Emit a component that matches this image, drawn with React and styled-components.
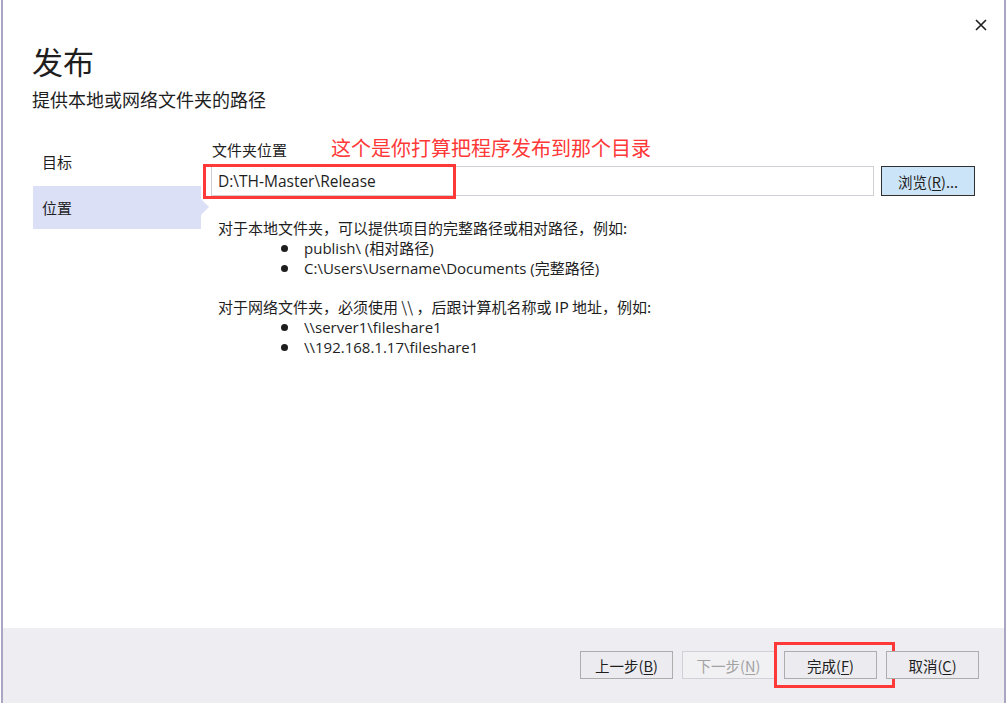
import React from "react";
import styled, { createGlobalStyle } from "styled-components";

const Global = createGlobalStyle`
  html, body { margin: 0; padding: 0; background: #ffffff; }
  body {
    font-family: "Noto Sans", "Noto Sans CJK SC", sans-serif;
    color: #1e1e1e;
  }
  * { box-sizing: border-box; }
`;

const Page = styled.div`
  width: 1007px;
  height: 703px;
  padding-left: 1px;
  display: flex;
  background: #fff;
`;

const Window = styled.div`
  position: relative;
  width: 1005px;
  height: 703px;
  border-left: 2px solid #a9a6c4;
  border-right: 2px solid #a9a6c4;
  display: flex;
  flex-direction: column;
  background: #fff;
`;

const Header = styled.header`
  padding: 40px 0 0 29px;
`;

const Title = styled.h1`
  margin: 0;
  font-family: "Noto Sans CJK SC", sans-serif;
  font-weight: 400;
  font-size: 31px;
  line-height: 42px;
  color: #1e1e1e;
`;

const Subtitle = styled.div`
  margin-top: 5px;
  font-family: "Noto Sans CJK SC", sans-serif;
  font-size: 18px;
  line-height: 24px;
  color: #1e1e1e;
`;

const Close = styled.button`
  position: absolute;
  top: 15px;
  right: 13px;
  width: 20px;
  height: 20px;
  padding: 0;
  border: none;
  background: transparent;
  display: flex;
  align-items: center;
  justify-content: center;
`;

const Body = styled.div`
  display: flex;
  padding-left: 30px;
  margin-top: 29px;
`;

const Sidebar = styled.nav`
  width: 168px;
  flex: none;
  display: flex;
  flex-direction: column;
  gap: 3px;
`;

const NavItem = styled.div`
  position: relative;
  height: 43px;
  display: flex;
  align-items: center;
  padding-left: 9px;
  font-family: "Noto Sans CJK SC", sans-serif;
  font-size: 15px;
  color: #1e1e1e;
  background: ${(p) => (p.$active ? "#dbe0f7" : "transparent")};
  &::after {
    content: "";
    display: ${(p) => (p.$active ? "block" : "none")};
    position: absolute;
    right: -8px;
    top: 13px;
    border-top: 8px solid transparent;
    border-bottom: 8px solid transparent;
    border-left: 8px solid #dbe0f7;
  }
`;

const Content = styled.div`
  margin-left: 10px;
  flex: 1;
  padding-right: 29px;
`;

const LabelRow = styled.div`
  display: flex;
  align-items: flex-start;
  height: 23px;
`;

const Label = styled.label`
  font-family: "Noto Sans CJK SC", sans-serif;
  font-size: 15px;
  line-height: 20px;
  padding-left: 1px;
  width: 120px;
  color: #1e1e1e;
`;

const Annotation = styled.span`
  font-family: "Noto Sans CJK SC", sans-serif;
  font-size: 20px;
  line-height: 26px;
  color: #ff3838;
  position: relative;
  top: -5px;
`;

const InputRow = styled.div`
  display: flex;
  gap: 7px;
  margin-top: 3px;
`;

const InputWrap = styled.div`
  position: relative;
  flex: 1;
`;

const Input = styled.div`
  height: 30px;
  border: 1px solid #cfcfd6;
  background: #fff;
  display: flex;
  align-items: center;
  padding-left: 6px;
  font-family: "Open Sans", "Noto Sans CJK SC", sans-serif;
  font-size: 15.5px;
  color: #1e1e1e;
`;

const RedBox = styled.div`
  position: absolute;
  left: ${(p) => p.$l}px;
  top: ${(p) => p.$t}px;
  width: ${(p) => p.$w}px;
  height: ${(p) => p.$h}px;
  border: 3px solid #ff3838;
  pointer-events: none;
`;

const BrowseButton = styled.button`
  width: 94px;
  height: 30px;
  border: 1px solid #2f2f2f;
  background: #cce4f7;
  font-family: "Noto Sans CJK SC", sans-serif;
  font-size: 14.5px;
  color: #1e1e1e;
  padding: 0;
`;

const Help = styled.div`
  margin-top: 22px;
  padding-left: 7px;
  font-family: "Noto Sans CJK SC", sans-serif;
  font-size: 15px;
  line-height: 20px;
  color: #1e1e1e;
`;

const Para = styled.p`
  margin: 0 0 19px 0;
`;

const List = styled.ul`
  list-style: none;
  margin: 0;
  padding: 0 0 0 63px;
`;

const Item = styled.li`
  display: flex;
  align-items: center;
  height: 20px;
  font-family: "Open Sans", "Noto Sans CJK SC", sans-serif;
  font-size: 15px;
  &::before {
    content: "";
    width: 7px;
    height: 7px;
    border-radius: 50%;
    background: #1e1e1e;
    margin-right: 16px;
    flex: none;
  }
`;

const Spacer = styled.div`
  flex: 1;
`;

const Footer = styled.footer`
  height: 75px;
  background: #eeeef2;
  display: flex;
  align-items: center;
  justify-content: flex-end;
  gap: 9px;
  padding-right: 25px;
  padding-bottom: 1px;
`;

const FooterButton = styled.button`
  position: relative;
  width: 93px;
  height: 28px;
  padding: 0;
  background: ${(p) => (p.disabled ? "#f1f1f4" : "#ececf0")};
  border: 1px solid ${(p) => (p.disabled ? "#d0d0d6" : "#adadad")};
  color: ${(p) => (p.disabled ? "#a2a2a2" : "#1e1e1e")};
  font-family: "Noto Sans CJK SC", sans-serif;
  font-size: 14.5px;
`;

const U = styled.span`
  text-decoration: underline;
  text-underline-offset: 2px;
`;

export default function App() {
  return (
    <>
      <Global />
      <Page>
        <Window>
          <Close aria-label="close">
            <svg width="12" height="12" viewBox="0 0 12 12">
              <path d="M1 1 L11 11 M11 1 L1 11" stroke="#1e1e1e" strokeWidth="1.6" />
            </svg>
          </Close>
          <Header>
            <Title>发布</Title>
            <Subtitle>提供本地或网络文件夹的路径</Subtitle>
          </Header>
          <Body>
            <Sidebar>
              <NavItem>目标</NavItem>
              <NavItem $active>位置</NavItem>
            </Sidebar>
            <Content>
              <LabelRow>
                <Label>文件夹位置</Label>
                <Annotation>这个是你打算把程序发布到那个目录</Annotation>
              </LabelRow>
              <InputRow>
                <InputWrap>
                  <Input>D:\TH-Master\Release</Input>
                  <RedBox $l={-8} $t={-2} $w={253} $h={35} />
                </InputWrap>
                <BrowseButton>
                  浏览(<U>R</U>)...
                </BrowseButton>
              </InputRow>
              <Help>
                <div>对于本地文件夹，可以提供项目的完整路径或相对路径，例如:</div>
                <List>
                  <Item>publish\ (相对路径)</Item>
                  <Item>C:\Users\Username\Documents (完整路径)</Item>
                </List>
                <Para />
                <div>对于网络文件夹，必须使用 \\ ，后跟计算机名称或 IP 地址，例如:</div>
                <List>
                  <Item>\\server1\fileshare1</Item>
                  <Item>\\192.168.1.17\fileshare1</Item>
                </List>
              </Help>
            </Content>
          </Body>
          <Spacer />
          <Footer>
            <FooterButton>
              上一步(<U>B</U>)
            </FooterButton>
            <FooterButton disabled>
              下一步(<U>N</U>)
            </FooterButton>
            <FooterButton>
              完成(<U>F</U>)
              <RedBox $l={-11} $t={-10} $w={121} $h={46} />
            </FooterButton>
            <FooterButton>
              取消(<U>C</U>)
            </FooterButton>
          </Footer>
        </Window>
      </Page>
    </>
  );
}
